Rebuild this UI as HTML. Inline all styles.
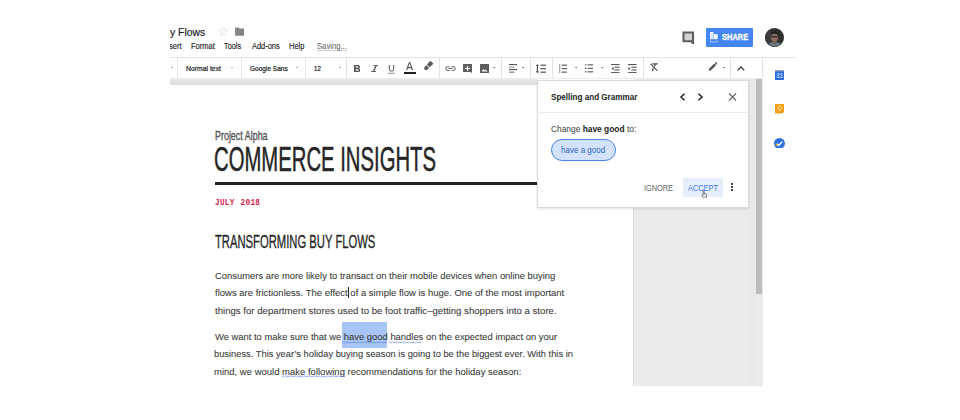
<!DOCTYPE html>
<html><head><meta charset="utf-8">
<style>
*{margin:0;padding:0;box-sizing:border-box}
html,body{width:960px;height:420px;overflow:hidden;background:#fff}
body{position:relative;font-family:"Liberation Sans",sans-serif;color:#202124}
.a{position:absolute;white-space:nowrap}
.sep{position:absolute;width:1px;background:#e3e3e3}
.tt{position:absolute;font-size:7.2px;color:#222;-webkit-text-stroke:0.22px #222;top:63.5px;transform-origin:0 0;white-space:nowrap}
.dd{position:absolute;width:0;height:0;border-left:1.2px solid transparent;border-right:1.2px solid transparent;border-top:1.6px solid #666;top:67.4px}
.ic{position:absolute}
.mn{top:41px;font-size:8.4px;color:#1a1a1a;-webkit-text-stroke:0.12px #1a1a1a;transform-origin:0 0}
.body{position:absolute;font-size:9.9px;color:#3a3a3a;-webkit-text-stroke:0.08px #3a3a3a;white-space:nowrap;transform-origin:0 0}
.cond{position:absolute;white-space:nowrap;transform-origin:0 0;color:#222}
</style></head><body>

<!-- title -->
<div id="ti" class="a" style="transform:scaleX(0.9459);transform-origin:0 0;left:170.00px;top:25.5px;font-size:11px;color:#1d1d1d;-webkit-text-stroke:0.2px #1d1d1d">y Flows</div>
<!-- star -->
<svg class="ic" style="left:218px;top:26px" width="11" height="11" viewBox="0 0 24 24"><path d="M12 2.5l2.9 6.3 6.8.6-5.2 4.5 1.6 6.7L12 17.1 5.9 20.6l1.6-6.7L2.3 9.4l6.8-.6z" fill="none" stroke="#e2e2e2" stroke-width="1.8"/></svg>
<!-- folder -->
<svg class="ic" style="left:234.8px;top:27px" width="9.2" height="9" viewBox="0 0 10 10"><path d="M0 0.5h4l1 1.2h5v8H0z" fill="#858585"/></svg>

<!-- menu -->
<div class="a" style="left:170px;top:38px;width:20px;height:16px;overflow:hidden"><div id="m1x" class="a mn" style="transform:scaleX(0.9);left:-0.9px;top:3px">sert</div></div>
<div id="m2" class="a mn" style="transform:scaleX(0.9015);left:190.58px">Format</div>
<div id="m3" class="a mn" style="transform:scaleX(0.8751);left:224.20px">Tools</div>
<div id="m4" class="a mn" style="transform:scaleX(0.8892);left:251.62px">Add-ons</div>
<div id="m5" class="a mn" style="transform:scaleX(0.8958);left:289.14px">Help</div>
<div id="m6" class="a mn" style="transform:scaleX(0.9153);left:317.09px;color:#8a8a8a;text-decoration:underline;text-decoration-color:#ccc">Saving...</div>

<!-- toolbar -->
<div class="a" style="left:170px;top:56.8px;width:625px;height:1.2px;background:#e4e4e4"></div>
<div class="a" style="left:170px;top:78px;width:592px;height:1px;background:#ececec"></div>
<div class="sep" style="left:177px;top:57px;height:21px"></div>
<div class="sep" style="left:241px;top:57px;height:21px"></div>
<div class="sep" style="left:305px;top:57px;height:21px"></div>
<div class="sep" style="left:346px;top:57px;height:21px"></div>
<div class="sep" style="left:439px;top:57px;height:21px"></div>
<div class="sep" style="left:501px;top:57px;height:21px"></div>
<div class="sep" style="left:530px;top:57px;height:21px"></div>
<div class="sep" style="left:552px;top:57px;height:21px"></div>
<div class="sep" style="left:643px;top:57px;height:21px"></div>
<div class="sep" style="left:730px;top:57px;height:21px"></div>
<div class="sep" style="left:762px;top:57px;height:330px"></div>

<div class="dd" style="left:171px"></div>
<div id="t1" class="tt" style="transform:scaleX(0.9518);left:186.08px">Normal text</div>
<div class="dd" style="left:230.5px"></div>
<div id="t2" class="tt" style="transform:scaleX(0.9076);left:250.32px">Google Sans</div>
<div class="dd" style="left:295.5px"></div>
<div id="t3" class="tt" style="transform:scaleX(0.8511);left:314.46px">12</div>
<div class="dd" style="left:338.8px"></div>

<!-- B -->
<svg class="ic" style="left:353.5px;top:64.8px" width="6.4" height="7" viewBox="7 4 10.8 14" preserveAspectRatio="none"><path d="M15.6 10.79c.97-.67 1.65-1.77 1.65-2.79 0-2.26-1.75-4-4-4H7v14h7.04c2.09 0 3.71-1.7 3.71-3.79 0-1.52-.86-2.82-2.15-3.42zM10 6.5h3c.83 0 1.5.67 1.5 1.5s-.67 1.5-1.5 1.5h-3v-3zm3.5 9H10v-3h3.5c.83 0 1.5.67 1.5 1.5s-.67 1.5-1.5 1.5z" fill="#555"/></svg>
<!-- I -->
<svg class="ic" style="left:370.5px;top:64.8px" width="7.5" height="7" viewBox="6 4 12 14" preserveAspectRatio="none"><path d="M10 4v2.2h2.6l-3.9 9.6H6V18h8v-2.2h-2.6l3.9-9.6H18V4z" fill="#666"/></svg>
<!-- U -->
<svg class="ic" style="left:388px;top:64.5px" width="7" height="9" viewBox="5 3 14 18" preserveAspectRatio="none"><path d="M12 16.2c3.1 0 5.4-2.4 5.4-5.4V3h-2.2v7.8c0 1.9-1.4 3.3-3.2 3.3s-3.2-1.4-3.2-3.3V3H6.6v7.8c0 3 2.3 5.4 5.4 5.4z" fill="#666"/><rect x="5" y="18.5" width="14" height="2.5" fill="#aaa"/></svg>
<!-- A -->
<svg class="ic" style="left:405.8px;top:62px" width="7.2" height="8" viewBox="5 3 13 14" preserveAspectRatio="none"><path d="M10.6 3L5 17h2.3l1.2-3.2h6l1.2 3.2H18L12.4 3h-1.8zm-1.4 8.8L11.5 5.6l2.3 6.2H9.2z" fill="#555"/></svg>
<div class="a" style="left:403.8px;top:72px;width:12.2px;height:2.4px;background:#1e1e1e"></div>
<!-- highlighter -->
<svg class="ic" style="left:423px;top:60px" width="11" height="11" viewBox="0 0 11 11"><g transform="translate(1.6 9.6) rotate(-45)"><path d="M0 -0.6L1.8 -1.9H4.4V1.9H1.8L0 0.6z" fill="#585858"/><rect x="5.2" y="-2" width="5.2" height="4" fill="#585858"/></g></svg>
<!-- link -->
<svg class="ic" style="left:444.5px;top:65.8px" width="11" height="5.2" viewBox="0 0 22 10.4"><path d="M5.2 0.6h3.6v2H5.2a2.6 2.6 0 000 5.2h3.6v2H5.2a4.6 4.6 0 010-9.2zm8 0h3.6a4.6 4.6 0 010 9.2h-3.6v-2h3.6a2.6 2.6 0 000-5.2h-3.6zM7 4.2h8v2H7z" fill="#666"/></svg>
<!-- add comment -->
<svg class="ic" style="left:463px;top:63.5px" width="9" height="9.5" viewBox="0 0 9 9.5"><path d="M0 0.5Q0 0 .5 0h8Q9 0 9 .5v9L7.8 8H.5Q0 8 0 7.5z" fill="#5f5f5f"/><path d="M4 2h1.1v1.9H7V5H5.1v1.9H4V5H2.1V3.9H4z" fill="#fff"/></svg>
<!-- image -->
<svg class="ic" style="left:479.8px;top:63.6px" width="9.2" height="9.2" viewBox="0 0 9.2 9.2"><rect width="9.2" height="9.2" rx="0.6" fill="#5f5f5f"/><path d="M1.6 7.4l1.8-2.3 1.3 1.5 1.1-1.2 1.8 2z" fill="#fff"/></svg>
<svg class="ic" style="left:493.4px;top:67.4px" width="2.4" height="1.6" viewBox="0 0 4 2.6"><path d="M0 0h4L2 2.6z" fill="#666"/></svg>
<!-- align -->
<svg class="ic" style="left:508.8px;top:63.8px" width="8.6" height="8.8" viewBox="0 0 8.6 8.8"><rect y="0" width="8.6" height="1.1" fill="#555"/><rect y="2.5" width="5.6" height="1.1" fill="#999"/><rect y="5" width="8.6" height="1.1" fill="#555"/><rect y="7.6" width="5.6" height="1.1" fill="#777"/></svg>
<svg class="ic" style="left:522.3px;top:67.4px" width="2.4" height="1.6" viewBox="0 0 4 2.6"><path d="M0 0h4L2 2.6z" fill="#666"/></svg>
<!-- line spacing -->
<svg class="ic" style="left:536px;top:63.5px" width="10.4" height="9.4" viewBox="0 0 10.4 9.4"><path d="M1.4 0L3 2.1H2v5.2h1L1.4 9.4-.2 7.3h1V2.1h-1z" fill="#555"/><rect x="4.4" y="0.6" width="6" height="1.2" fill="#555"/><rect x="4.4" y="4.1" width="6" height="1.2" fill="#555"/><rect x="4.4" y="7.6" width="6" height="1.2" fill="#555"/></svg>
<!-- numbered list -->
<svg class="ic" style="left:558.8px;top:63.5px" width="8.6" height="9.4" viewBox="0 0 8.6 9.4"><rect x="0.3" y="0" width="0.9" height="9.4" fill="#888"/><rect x="2.6" y="0.6" width="6" height="1.1" fill="#555"/><rect x="2.6" y="4.1" width="6" height="1.1" fill="#555"/><rect x="2.6" y="7.6" width="6" height="1.1" fill="#555"/></svg>
<svg class="ic" style="left:574.8px;top:67.4px" width="2.4" height="1.6" viewBox="0 0 4 2.6"><path d="M0 0h4L2 2.6z" fill="#666"/></svg>
<!-- bullet list -->
<svg class="ic" style="left:585px;top:63.8px" width="8.4" height="8.8" viewBox="0 0 8.4 8.8"><rect x="0" y="0.2" width="1.4" height="1.3" fill="#555"/><rect x="0" y="3.7" width="1.4" height="1.3" fill="#555"/><rect x="0" y="7.2" width="1.4" height="1.3" fill="#555"/><rect x="2.6" y="0.3" width="5.8" height="1.1" fill="#555"/><rect x="2.6" y="3.8" width="5.8" height="1.1" fill="#555"/><rect x="2.6" y="7.3" width="5.8" height="1.1" fill="#555"/></svg>
<svg class="ic" style="left:600.8px;top:67.4px" width="2.4" height="1.6" viewBox="0 0 4 2.6"><path d="M0 0h4L2 2.6z" fill="#666"/></svg>
<!-- decrease indent -->
<svg class="ic" style="left:611px;top:63.6px" width="8.6" height="9.2" viewBox="0 0 8.6 9.2"><rect y="0" width="8.6" height="1.1" fill="#555"/><rect x="3.4" y="2.7" width="5.2" height="1.1" fill="#555"/><rect x="3.4" y="5.4" width="5.2" height="1.1" fill="#555"/><rect y="8.1" width="8.6" height="1.1" fill="#555"/><path d="M0.4 4.6L2.6 2.9v3.4z" fill="#555"/></svg>
<!-- increase indent -->
<svg class="ic" style="left:628.2px;top:63.6px" width="8.6" height="9.2" viewBox="0 0 8.6 9.2"><rect y="0" width="8.6" height="1.1" fill="#555"/><rect x="3.4" y="2.7" width="5.2" height="1.1" fill="#555"/><rect x="3.4" y="5.4" width="5.2" height="1.1" fill="#555"/><rect y="8.1" width="8.6" height="1.1" fill="#555"/><path d="M2.6 4.6L0.4 2.9v3.4z" fill="#555"/></svg>
<!-- clear formatting -->
<svg class="ic" style="left:650.3px;top:63.4px" width="8.2" height="8.6" viewBox="0 0 8.2 8.6"><path d="M2.2 0.2h6v1.2H5.9L4.9 4.1 3.8 3l.6-1.6H2.2z" fill="#555"/><path d="M0.9 0.5l7 7-.8.8-7-7z" fill="#555"/><path d="M2.8 4.6l1.1 1.1-.9 2.6H1.7z" fill="#555"/></svg>
<!-- pen mode -->
<svg class="ic" style="left:708.5px;top:62px" width="8.6" height="8.6" viewBox="3 3 18 18"><path d="M3 17.25V21h3.75L17.81 9.94l-3.75-3.75L3 17.25zM20.71 7.04a1 1 0 000-1.41l-2.34-2.34a1 1 0 00-1.41 0l-1.83 1.83 3.75 3.75 1.83-1.83z" fill="#555"/></svg>
<svg class="ic" style="left:722.8px;top:67.4px" width="2.4" height="1.6" viewBox="0 0 4 2.6"><path d="M0 0h4L2 2.6z" fill="#666"/></svg>
<!-- caret up -->
<svg class="ic" style="left:737px;top:65.8px" width="8" height="5" viewBox="0 0 8 5"><path d="M0.7 4.3L4 1 7.3 4.3" fill="none" stroke="#444" stroke-width="1.3"/></svg>

<!-- header right -->
<svg class="ic" style="left:681.5px;top:30.5px" width="13" height="13" viewBox="0 0 13 13"><path d="M1.5 1.5h9.5v10.8L9.2 10.2H1.5z" fill="#d4d4d4" stroke="#5e5e5e" stroke-width="2.1" stroke-linejoin="miter"/></svg>
<div class="a" style="left:705.8px;top:27.8px;width:46.8px;height:19.3px;background:#4586f3;border-radius:1px"></div>
<svg class="ic" style="left:710.3px;top:32.3px" width="7.6" height="10.8" viewBox="0 0 7.6 10.8"><rect x="0" y="0" width="3.4" height="7.2" fill="#fff"/><rect x="3.8" y="2.2" width="3.8" height="5" fill="#fff"/><rect x="0.6" y="1.2" width="2.2" height="5.4" fill="#cfe0fd"/><path d="M0.4 8.2v1.8h6.8V8.2" fill="none" stroke="#cfe0fd" stroke-width="0.7"/></svg>
<div id="sh" class="a" style="transform:scaleX(0.87);transform-origin:0 0;left:721.6px;top:32.2px;font-size:8.6px;font-weight:bold;color:#fff;-webkit-text-stroke:0.3px #fff">SHARE</div>
<svg class="ic" style="left:764.5px;top:27.6px" width="19" height="19" viewBox="0 0 19 19"><defs><clipPath id="av"><circle cx="9.5" cy="9.5" r="9.3"/></clipPath></defs><g clip-path="url(#av)"><rect width="19" height="19" fill="#2e2e2c"/><rect x="0" y="0" width="6" height="19" fill="#3c3f3a"/><ellipse cx="9.6" cy="19" rx="7.5" ry="5" fill="#6f7c88"/><ellipse cx="9.5" cy="9.6" rx="3.6" ry="4.6" fill="#8c6e60"/><path d="M5.6 7.2Q5.8 3.6 9.5 3.4 13.3 3.6 13.4 7.2 12 5.6 9.5 5.8 7 5.6 5.6 7.2z" fill="#1e1e1e"/><rect x="6.3" y="8" width="6.4" height="1.6" rx="0.6" fill="#2c2c30"/><rect x="8.2" y="13.6" width="2.6" height="2.4" fill="#7a5e52"/></g><circle cx="9.5" cy="9.5" r="9.1" fill="none" stroke="#222" stroke-width="0.6"/></svg>

<!-- side panel icons -->
<svg class="ic" style="left:774.6px;top:70px" width="9.4" height="10" viewBox="0 0 9.4 10"><rect width="9.4" height="10" fill="#2b6de1"/><rect width="9.4" height="1.4" fill="#9aa6b8"/><text x="4.7" y="8.4" font-family="Liberation Sans" font-size="6.4" font-weight="bold" text-anchor="middle" fill="#b5cdf5">31</text></svg>
<svg class="ic" style="left:774.5px;top:104.2px" width="9.2" height="9.6" viewBox="0 0 9.2 9.6"><path d="M0 0h9.2v7.4L7 9.6H0z" fill="#f5a21a"/><path d="M7 9.6V7.4h2.2z" fill="#c97c0c"/><circle cx="4.6" cy="3.8" r="1.7" fill="none" stroke="#fbe3b8" stroke-width="0.8"/><rect x="3.9" y="5.6" width="1.4" height="1.4" fill="#fbe3b8"/></svg>
<svg class="ic" style="left:773.8px;top:137.5px" width="10.9" height="10.9" viewBox="0 0 11 11"><circle cx="5.5" cy="5.5" r="5.5" fill="#2f73e0"/><path d="M3 5.8l1.7 1.7 3.6-3.8" fill="none" stroke="#fff" stroke-width="1.4"/><circle cx="2.6" cy="6.8" r="1" fill="#f4b400"/></svg>

<!-- gray band under toolbar -->
<div class="a" style="left:170px;top:79px;width:367px;height:6px;background:linear-gradient(#e9e9e9,#dddddd)"></div>

<!-- right gray area -->
<div class="a" style="left:633px;top:79px;width:130px;height:307px;background:#ebebeb"></div>
<div class="a" style="left:633px;top:85px;width:1px;height:301px;background:#dedede"></div>
<div class="a" style="left:749px;top:79px;width:7px;height:307px;background:#e9e9e9"></div>
<div class="a" style="left:756px;top:79px;width:6px;height:215px;background:#bdbdbd"></div>

<!-- doc -->
<div id="pa" class="cond" style="transform:scaleX(0.6861);left:214.76px;top:128px;font-size:13px;color:#555;-webkit-text-stroke:0.35px #555">Project Alpha</div>
<div id="ci" class="cond" style="transform:scaleX(0.5795);left:213.99px;top:139px;font-size:35px;color:#262626;-webkit-text-stroke:0.5px #262626">COMMERCE INSIGHTS</div>
<div class="a" style="left:215px;top:182px;width:322px;height:3px;background:#222"></div>
<div id="jl" class="a" style="transform:scaleX(0.8792) scaleY(1.12);transform-origin:0 0;left:215.42px;top:196.9px;font-family:'Liberation Mono',monospace;font-weight:bold;font-size:8.8px;color:#dc1a4e;letter-spacing:0.3px;word-spacing:1.2px">JULY 2018</div>
<div id="tb" class="cond" style="transform:scaleX(0.5919);left:214.80px;top:230.5px;font-size:19px;color:#262626;-webkit-text-stroke:0.35px #262626">TRANSFORMING BUY FLOWS</div>

<div id="b1" class="body" style="transform:scaleX(0.9524);left:214.80px;top:270px">Consumers are more likely to transact on their mobile devices when online buying</div>
<div id="b2" class="body" style="transform:scaleX(0.9622);left:214.80px;top:287px">flows are frictionless. The effect of a simple flow is huge. One of the most important</div>
<div id="b3" class="body" style="transform:scaleX(0.9744);left:214.80px;top:305px">things for department stores used to be foot traffic–getting shoppers into a store.</div>
<div class="a" style="left:342px;top:322px;width:45px;height:26px;background:#a9c5f5"></div>
<div id="b4" class="body" style="transform:scaleX(0.9519);left:214.80px;top:331px">We want to make sure that we have good handles on the expected impact on your</div>
<div id="b5" class="body" style="transform:scaleX(0.9434);left:213.80px;top:348px">business. This year’s holiday buying season is going to be the biggest ever. With this in</div>
<div id="b6" class="body" style="transform:scaleX(0.9619);left:213.80px;top:366px">mind, we would make following recommendations for the holiday season:</div>


<!-- squiggles & cursor -->
<svg class="ic" style="left:342px;top:340.8px" width="45.0" height="3" viewBox="0 0 45.0 3"><path d="M0 1.5 L1.20 0.9 L2.40 1.9 L3.60 0.9 L4.80 1.9 L6.00 0.9 L7.20 1.9 L8.40 0.9 L9.60 1.9 L10.80 0.9 L12.00 1.9 L13.20 0.9 L14.40 1.9 L15.60 0.9 L16.80 1.9 L18.00 0.9 L19.20 1.9 L20.40 0.9 L21.60 1.9 L22.80 0.9 L24.00 1.9 L25.20 0.9 L26.40 1.9 L27.60 0.9 L28.80 1.9 L30.00 0.9 L31.20 1.9 L32.40 0.9 L33.60 1.9 L34.80 0.9 L36.00 1.9 L37.20 0.9 L38.40 1.9 L39.60 0.9 L40.80 1.9 L42.00 0.9 L43.20 1.9 L44.40 0.9 L45.00 1.9" fill="none" stroke="#4d82e6" stroke-width="0.8" opacity="0.85"/></svg>
<svg class="ic" style="left:389.2px;top:340.8px" width="32.3" height="3" viewBox="0 0 32.3 3"><path d="M0 1.5 L1.20 0.9 L2.40 1.9 L3.60 0.9 L4.80 1.9 L6.00 0.9 L7.20 1.9 L8.40 0.9 L9.60 1.9 L10.80 0.9 L12.00 1.9 L13.20 0.9 L14.40 1.9 L15.60 0.9 L16.80 1.9 L18.00 0.9 L19.20 1.9 L20.40 0.9 L21.60 1.9 L22.80 0.9 L24.00 1.9 L25.20 0.9 L26.40 1.9 L27.60 0.9 L28.80 1.9 L30.00 0.9 L31.20 1.9 L32.30 0.9" fill="none" stroke="#4d82e6" stroke-width="0.8" opacity="0.85"/></svg>
<svg class="ic" style="left:282.2px;top:374.5px" width="62.8" height="3" viewBox="0 0 62.8 3"><path d="M0 1.5 L1.20 0.9 L2.40 1.9 L3.60 0.9 L4.80 1.9 L6.00 0.9 L7.20 1.9 L8.40 0.9 L9.60 1.9 L10.80 0.9 L12.00 1.9 L13.20 0.9 L14.40 1.9 L15.60 0.9 L16.80 1.9 L18.00 0.9 L19.20 1.9 L20.40 0.9 L21.60 1.9 L22.80 0.9 L24.00 1.9 L25.20 0.9 L26.40 1.9 L27.60 0.9 L28.80 1.9 L30.00 0.9 L31.20 1.9 L32.40 0.9 L33.60 1.9 L34.80 0.9 L36.00 1.9 L37.20 0.9 L38.40 1.9 L39.60 0.9 L40.80 1.9 L42.00 0.9 L43.20 1.9 L44.40 0.9 L45.60 1.9 L46.80 0.9 L48.00 1.9 L49.20 0.9 L50.40 1.9 L51.60 0.9 L52.80 1.9 L54.00 0.9 L55.20 1.9 L56.40 0.9 L57.60 1.9 L58.80 0.9 L60.00 1.9 L61.20 0.9 L62.40 1.9 L62.80 0.9" fill="none" stroke="#4d82e6" stroke-width="0.8" opacity="0.85"/></svg>
<div class="a" style="left:348px;top:287px;width:1px;height:11px;background:#222"></div>
<!-- popup -->
<div class="a" style="left:536.5px;top:79.5px;width:212px;height:128.5px;background:#fff;border:1px solid #d9d9d9;box-shadow:0 1px 2px rgba(0,0,0,0.12)"></div>
<div class="a" style="left:537px;top:112px;width:211px;height:1px;background:#ececec"></div>
<div id="p1" class="a" style="transform:scaleX(0.8625);transform-origin:0 0;left:551.25px;top:91px;font-size:9.4px;font-weight:bold;color:#222">Spelling and Grammar</div>
<svg class="ic" style="left:679px;top:93px" width="7" height="8" viewBox="0 0 7 8"><path d="M5.5 0.7L2 4l3.5 3.3" fill="none" stroke="#222" stroke-width="1.5"/></svg>
<svg class="ic" style="left:697px;top:93px" width="7" height="8" viewBox="0 0 7 8"><path d="M1.5 0.7L5 4 1.5 7.3" fill="none" stroke="#222" stroke-width="1.5"/></svg>
<svg class="ic" style="left:728px;top:93px" width="9" height="8" viewBox="0 0 9 8"><path d="M1 0.5l7 7M8 0.5l-7 7" fill="none" stroke="#666" stroke-width="1.2"/></svg>
<div id="p2" class="a" style="transform:scaleX(0.9308);transform-origin:0 0;left:551.00px;top:123.5px;font-size:9px;color:#3c4043">Change <b style="color:#202124">have good</b> to:</div>
<div class="a" style="left:551px;top:139px;width:65px;height:22px;border-radius:11px;background:#d3e3fc;border:1.2px solid #4a84e6"></div>
<div id="p3" class="a" style="transform:scaleX(0.8923);transform-origin:0 0;left:560.74px;top:145px;font-size:9px;color:#2d63c8">have a good</div>
<div class="a" style="left:683px;top:178px;width:40px;height:19px;background:#e6eefc"></div>
<div id="p4" class="a" style="transform:scaleX(0.8005);transform-origin:0 0;left:644.16px;top:182.8px;font-size:9.2px;color:#5f6368">IGNORE</div>
<div id="p5" class="a" style="transform:scaleX(0.8035);transform-origin:0 0;left:687.53px;top:182.8px;font-size:9.2px;color:#3b7be8">ACCEPT</div>
<svg class="ic" style="left:700.5px;top:189.5px" width="7.5" height="8.5" viewBox="0 0 15 17"><path d="M5 1.2c.8 0 1.4.6 1.4 1.4v5.2l.1-1c.8-.2 1.5.2 1.6.9.7-.3 1.5 0 1.6.8.8-.3 1.6.1 1.7 1 .1 1.5 0 3.8-.8 5.4L9.7 16H5.2L2.1 11.4c-.5-.7-.3-1.6.4-1.9.6-.3 1.2 0 1.5.4V2.6c0-.8.3-1.4 1-1.4z" fill="#ddd" stroke="#333" stroke-width="1.1"/></svg>
<div class="a" style="left:731px;top:183px;width:2px;height:2px;background:#444"></div>
<div class="a" style="left:731px;top:186px;width:2px;height:2px;background:#444"></div>
<div class="a" style="left:731px;top:189px;width:2px;height:2px;background:#444"></div>

</body></html>
